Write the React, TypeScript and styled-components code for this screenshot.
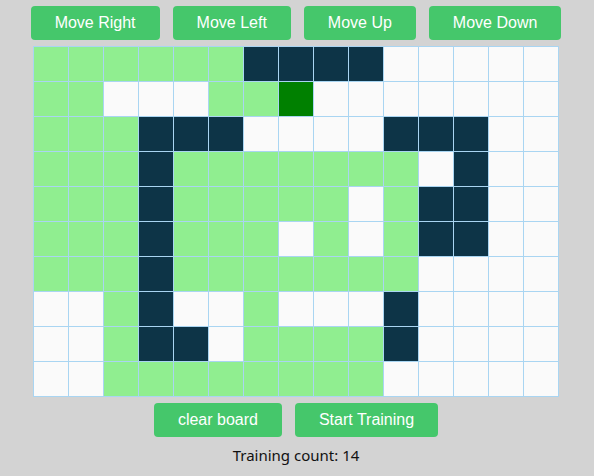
import React from "react";
import styled, { createGlobalStyle } from "styled-components";

const GlobalStyle = createGlobalStyle`
  html, body {
    margin: 0;
    padding: 0;
    background: #d3d3d3;
  }
  body {
    font-family: "Liberation Sans", Arial, sans-serif;
  }
`;

const Page = styled.div`
  display: flex;
  flex-direction: column;
  align-items: center;
  padding-top: 6px;
  width: 594px;
  box-sizing: border-box;
  padding-right: 2px;
`;

const ButtonRow = styled.div`
  display: flex;
  gap: 13px;
`;

const ActionButton = styled.button`
  height: 34px;
  padding: 0 24px;
  border: none;
  border-radius: 4px;
  background: #45c76b;
  color: #ffffff;
  font-family: "Liberation Sans", Arial, sans-serif;
  font-size: 16px;
  cursor: pointer;
`;

const Board = styled.div`
  margin: 6px 0;
  display: grid;
  grid-template-columns: repeat(15, 34px);
  grid-auto-rows: 34px;
  gap: 1px;
  padding: 1px;
  background: #a9d5f2;
`;

type CellKind = "G" | "D" | "W" | "A";

const cellColors: Record<CellKind, string> = {
  G: "#90ee90",
  D: "#0d3447",
  W: "#fafafa",
  A: "#008000",
};

const Cell = styled.div<{ $kind: CellKind }>`
  background: ${(p) => cellColors[p.$kind]};
`;

const Counter = styled.div`
  margin-top: 8px;
  font-family: "Noto Sans", "Open Sans", sans-serif;
  font-size: 15px;
  color: #111;
`;

const rows = [
  "GGGGGGDDDDWWWWW",
  "GGWWWGGAWWWWWWW",
  "GGGDDDWWWWDDDWW",
  "GGGDGGGGGGGWDWW",
  "GGGDGGGGGWGDDWW",
  "GGGDGGGWGWGDDWW",
  "GGGDGGGGGGGWWWW",
  "WWGDWWGWWWDWWWW",
  "WWGDDWGGGGDWWWW",
  "WWGGGGGGGGWWWWW",
];

export default function App() {
  return (
    <>
      <GlobalStyle />
      <Page>
        <ButtonRow>
          <ActionButton>Move Right</ActionButton>
          <ActionButton>Move Left</ActionButton>
          <ActionButton>Move Up</ActionButton>
          <ActionButton>Move Down</ActionButton>
        </ButtonRow>
        <Board>
          {rows.map((row, r) =>
            row.split("").map((k, c) => <Cell key={`${r}-${c}`} $kind={k as CellKind} />)
          )}
        </Board>
        <ButtonRow>
          <ActionButton>clear board</ActionButton>
          <ActionButton>Start Training</ActionButton>
        </ButtonRow>
        <Counter>Training count: 14</Counter>
      </Page>
    </>
  );
}
